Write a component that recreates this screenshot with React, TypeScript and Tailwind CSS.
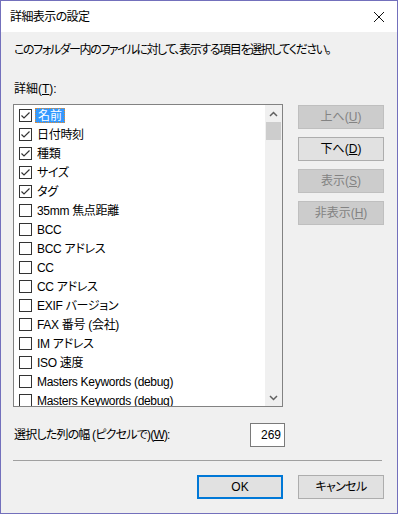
import React from "react";

const items: { label: string; checked: boolean }[] = [
  { label: "名前", checked: true },
  { label: "日付時刻", checked: true },
  { label: "種類", checked: true },
  { label: "サイズ", checked: true },
  { label: "タグ", checked: true },
  { label: "35mm 焦点距離", checked: false },
  { label: "BCC", checked: false },
  { label: "BCC アドレス", checked: false },
  { label: "CC", checked: false },
  { label: "CC アドレス", checked: false },
  { label: "EXIF バージョン", checked: false },
  { label: "FAX 番号 (会社)", checked: false },
  { label: "IM アドレス", checked: false },
  { label: "ISO 速度", checked: false },
  { label: "Masters Keywords (debug)", checked: false },
  { label: "Masters Keywords (debug)", checked: false },
];

function CheckBox({ checked }: { checked: boolean }) {
  return (
    <div className="w-[13px] h-[13px] border border-[#333333] bg-white shrink-0 flex items-center justify-center">
      {checked && (
        <svg width="11" height="11" viewBox="0 0 11 11">
          <path d="M1.5 5.5 L4 8 L9.5 2.5" fill="none" stroke="#333333" strokeWidth="1.2" />
        </svg>
      )}
    </div>
  );
}

function SideButton({ label, mnemonic, disabled }: { label: string; mnemonic: string; disabled?: boolean }) {
  return (
    <div
      className={
        disabled
          ? "w-[86px] h-[24px] bg-[#cccccc] border border-[#bfbfbf] text-[#838383] flex items-center justify-center"
          : "w-[86px] h-[24px] bg-[#e1e1e1] border border-[#adadad] text-black flex items-center justify-center"
      }
    >
      {label}(<span className="underline">{mnemonic}</span>)
    </div>
  );
}

export default function App() {
  return (
    <div className="w-[398px] h-[514px] border border-[#7370bc] flex flex-col text-[12px] text-black font-['Liberation_Sans','Noto_Sans_CJK_JP',sans-serif] [font-feature-settings:'palt']">
      <div className="h-[31px] bg-white flex items-center justify-between pl-[9px] pr-[10px]">
        <span className="leading-[16px] tracking-[-0.6px]">詳細表示の設定</span>
        <svg width="12" height="12" viewBox="0 0 12 12" className="mr-[2px]">
          <path d="M1 1 L11 11 M11 1 L1 11" stroke="#111111" strokeWidth="1" />
        </svg>
      </div>
      <div className="flex-1 bg-[#f0f0f0] flex flex-col px-[12px]">
        <div className="mt-[10px] leading-[16px] pl-[1px] tracking-[-1.4px] whitespace-nowrap">
          このフォルダー内のファイルに対して、表示する項目を選択してください。
        </div>
        <div className="mt-[23px] leading-[16px] pl-[1px]">
          詳細(<span className="underline">T</span>):
        </div>
        <div className="mt-[7px] flex">
          <div className="w-[270px] h-[303px] border border-[#828282] bg-white flex overflow-hidden">
            <div className="flex-1 flex flex-col pt-[1px] overflow-hidden">
              {items.map((it, i) => (
                <div key={i} className="h-[19px] shrink-0 flex items-center pl-[5px] gap-[3px]">
                  <CheckBox checked={it.checked} />
                  {i === 0 ? (
                    <span className="h-[15px] flex items-center px-[2px] bg-[#3399ff] text-white border border-dotted border-[#e08a30] whitespace-nowrap">
                      {it.label}
                    </span>
                  ) : (
                    <span className="h-[15px] flex items-center px-[1px] border border-transparent whitespace-nowrap tracking-[-0.3px]">
                      {it.label}
                    </span>
                  )}
                </div>
              ))}
            </div>
            <div className="w-[17px] bg-[#f0f0f0] flex flex-col">
              <div className="h-[17px] flex items-center justify-center">
                <svg width="9" height="6" viewBox="0 0 9 6">
                  <path d="M1 5 L4.5 1.5 L8 5" fill="none" stroke="#606060" strokeWidth="1.5" />
                </svg>
              </div>
              <div className="h-[18px] mx-[1px] bg-[#cdcdcd]" />
              <div className="flex-1" />
              <div className="h-[17px] flex items-center justify-center">
                <svg width="9" height="6" viewBox="0 0 9 6">
                  <path d="M1 1 L4.5 4.5 L8 1" fill="none" stroke="#606060" strokeWidth="1.5" />
                </svg>
              </div>
            </div>
          </div>
          <div className="ml-[15px] mt-[1px] flex flex-col gap-[8px]">
            <SideButton label="上へ" mnemonic="U" disabled />
            <SideButton label="下へ" mnemonic="D" />
            <SideButton label="表示" mnemonic="S" disabled />
            <SideButton label="非表示" mnemonic="H" disabled />
          </div>
        </div>
        <div className="mt-[16px] w-[272px] flex items-center justify-between">
          <span className="pl-[1px] leading-[16px] tracking-[-0.8px]">
            選択した列の幅 (ピクセルで)(<span className="underline">W</span>):
          </span>
          <div className="w-[35px] h-[24px] border border-[#7a7a7a] bg-white flex items-center justify-end pr-[3px]">
            269
          </div>
        </div>
        <div className="mt-[13px] w-[369px] h-[1px] bg-[#a0a0a0]" />
        <div className="mt-[14px] flex justify-end gap-[15px] pr-[1px]">
          <div className="w-[86px] h-[24px] bg-[#e1e1e1] border-2 border-[#0078d7] flex items-center justify-center">
            OK
          </div>
          <div className="w-[86px] h-[24px] bg-[#e1e1e1] border border-[#adadad] flex items-center justify-center tracking-[-0.6px]">
            キャンセル
          </div>
        </div>
      </div>
    </div>
  );
}
